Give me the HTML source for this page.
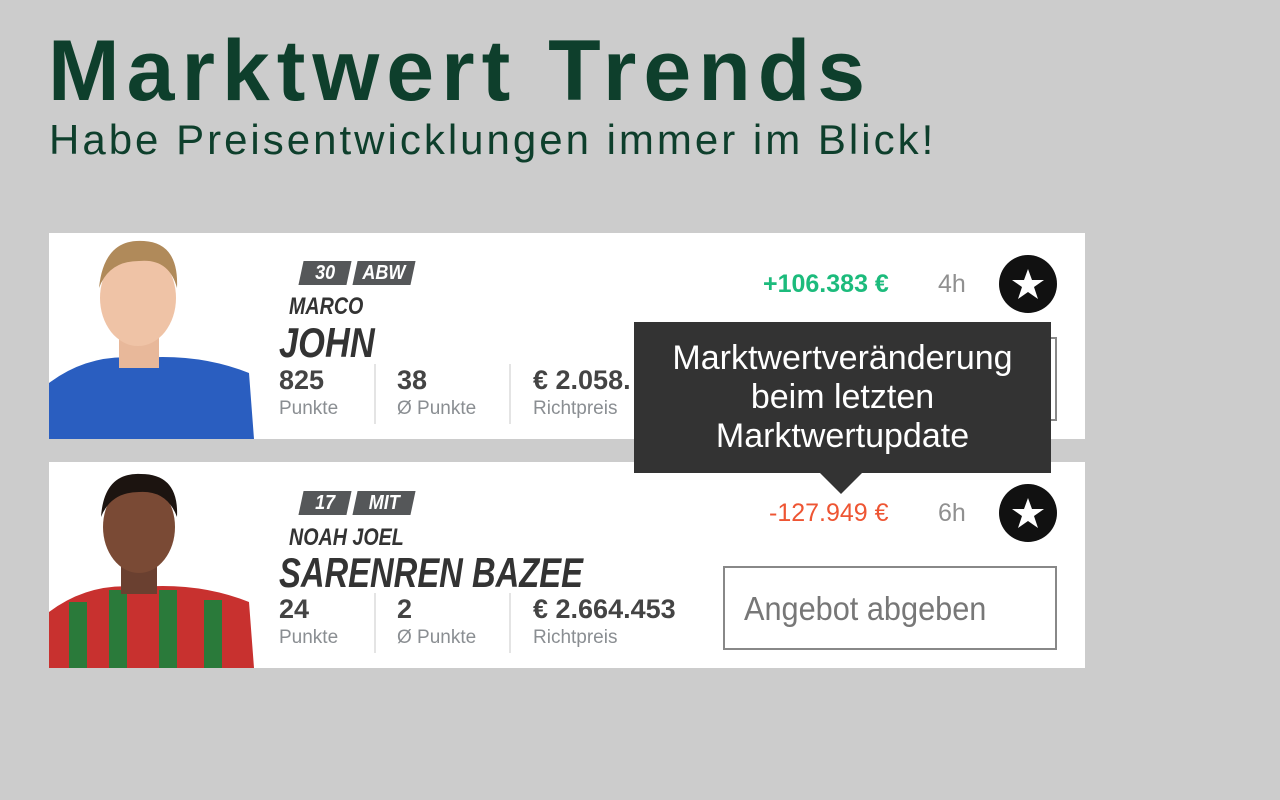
<!DOCTYPE html>
<html><head><meta charset="utf-8"><style>
*{margin:0;padding:0;box-sizing:border-box}
body{width:1280px;height:800px;background:#cccccc;font-family:"Liberation Sans",sans-serif;position:relative;overflow:hidden}
.t1{position:absolute;left:48px;top:22px;font-size:86px;font-weight:bold;color:#0e3f2c;letter-spacing:7px;white-space:nowrap}
.t2{position:absolute;left:49px;top:116px;font-size:42px;color:#0e3f2c;font-weight:normal;letter-spacing:3px;white-space:nowrap}
.card{position:absolute;left:49px;width:1036px;height:206px;background:#fff;overflow:hidden}
.tag{position:absolute;height:24px;background:#555759;color:#fff;font-style:italic;font-weight:bold;font-size:20px;line-height:24px;text-align:center;transform:skewX(-12deg)}
.tag span{display:inline-block;transform:skewX(12deg) scaleX(.9)}
.abs{position:absolute;white-space:nowrap}
.sx{transform:scaleX(.82);transform-origin:left top}
.first{left:240px;top:60px;font-size:24px;font-weight:bold;font-style:italic;color:#333}
.last{left:230px;top:86px;font-size:42px;font-weight:bold;font-style:italic;color:#333}
.num{font-size:27px;font-weight:bold;color:#444}
.lbl{font-size:19px;color:#8a8e92}
.sep{position:absolute;width:2px;background:#e4e4e4;height:60px}
.star{position:absolute;left:950px;width:58px;height:58px;border-radius:50%;background:#111}
.btn{position:absolute;left:674px;width:334px;height:84px;border:2px solid #888;color:#777}
</style></head><body>
<div class="t1">Marktwert Trends</div>
<div class="t2">Habe Preisentwicklungen immer im Blick!</div>

<div class="card" style="top:233px">
  <svg class="abs" style="left:0;top:0" width="205" height="206">
    <path d="M0 150 Q40 120 90 125 Q150 120 200 140 L205 206 L0 206Z" fill="#2a5ec0"/>
    <rect x="70" y="90" width="40" height="45" fill="#e8b89a"/>
    <ellipse cx="89" cy="65" rx="38" ry="48" fill="#efc3a6"/>
    <path d="M50 55 Q55 5 95 8 Q130 10 128 55 Q120 25 90 28 Q60 28 50 55Z" fill="#b08a5a"/>
  </svg>
  <div class="tag" style="left:252px;top:28px;width:48px"><span>30</span></div>
  <div class="tag" style="left:306px;top:28px;width:58px"><span>ABW</span></div>
  <div class="abs sx first">MARCO</div>
  <div class="abs sx last">JOHN</div>
  <div class="abs num" style="left:230px;top:132px">825</div>
  <div class="abs lbl" style="left:230px;top:165px">Punkte</div>
  <div class="sep" style="left:325px;top:131px"></div>
  <div class="abs num" style="left:348px;top:132px">38</div>
  <div class="abs lbl" style="left:348px;top:165px">Ø Punkte</div>
  <div class="sep" style="left:460px;top:131px"></div>
  <div class="abs num" style="left:484px;top:132px">€ 2.058.</div>
  <div class="abs lbl" style="left:484px;top:165px">Richtpreis</div>
  <div class="abs" style="left:714px;top:37px;font-size:25px;font-weight:bold;color:#1cbb7c">+106.383 €</div>
  <div class="abs" style="left:889px;top:37px;font-size:25px;color:#909090">4h</div>
  <div class="star" style="top:22px"><svg width="58" height="58"><polygon points="29,14 33,25 45,25 35,32 39,44 29,37 19,44 23,32 13,25 25,25" fill="#fff"/></svg></div>
  <div class="btn" style="top:104px"></div>
</div>

<div class="card" style="top:462px">
  <svg class="abs" style="left:0;top:0" width="205" height="206">
    <path d="M0 150 Q40 120 90 125 Q150 120 200 140 L205 206 L0 206Z" fill="#c8312f"/>
    <rect x="20" y="140" width="18" height="66" fill="#2a7a3a"/><rect x="60" y="128" width="18" height="78" fill="#2a7a3a"/><rect x="110" y="128" width="18" height="78" fill="#2a7a3a"/><rect x="155" y="138" width="18" height="68" fill="#2a7a3a"/>
    <rect x="72" y="92" width="36" height="40" fill="#6a4030"/>
    <ellipse cx="90" cy="65" rx="36" ry="46" fill="#7a4a35"/>
    <path d="M52 55 Q55 10 92 12 Q130 12 128 55 Q118 28 90 30 Q62 30 52 55Z" fill="#1c1410"/>
  </svg>
  <div class="tag" style="left:252px;top:29px;width:48px"><span>17</span></div>
  <div class="tag" style="left:306px;top:29px;width:58px"><span>MIT</span></div>
  <div class="abs sx first" style="top:62px">NOAH JOEL</div>
  <div class="abs last" style="top:87px;transform:scaleX(.78);transform-origin:left top">SARENREN BAZEE</div>
  <div class="abs num" style="left:230px;top:132px">24</div>
  <div class="abs lbl" style="left:230px;top:165px">Punkte</div>
  <div class="sep" style="left:325px;top:131px"></div>
  <div class="abs num" style="left:348px;top:132px">2</div>
  <div class="abs lbl" style="left:348px;top:165px">Ø Punkte</div>
  <div class="sep" style="left:460px;top:131px"></div>
  <div class="abs num" style="left:484px;top:132px">€ 2.664.453</div>
  <div class="abs lbl" style="left:484px;top:165px">Richtpreis</div>
  <div class="abs" style="left:720px;top:37px;font-size:25px;color:#ee5533">-127.949 €</div>
  <div class="abs" style="left:889px;top:37px;font-size:25px;color:#909090">6h</div>
  <div class="star" style="top:22px"><svg width="58" height="58"><polygon points="29,14 33,25 45,25 35,32 39,44 29,37 19,44 23,32 13,25 25,25" fill="#fff"/></svg></div>
  <div class="btn" style="top:104px"><div class="abs" style="left:19px;top:22px;font-size:33px;color:#777;transform:scaleX(.93);transform-origin:left top">Angebot abgeben</div></div>
</div>

<div class="abs" style="left:634px;top:322px;width:417px;height:151px;background:#333;color:#fff;font-size:34px;line-height:39px;text-align:center;padding-top:17px">Marktwertveränderung<br>beim letzten<br>Marktwertupdate</div>
<div class="abs" style="left:819px;top:472px;width:0;height:0;border-left:22px solid transparent;border-right:22px solid transparent;border-top:22px solid #333"></div>
</body></html>
